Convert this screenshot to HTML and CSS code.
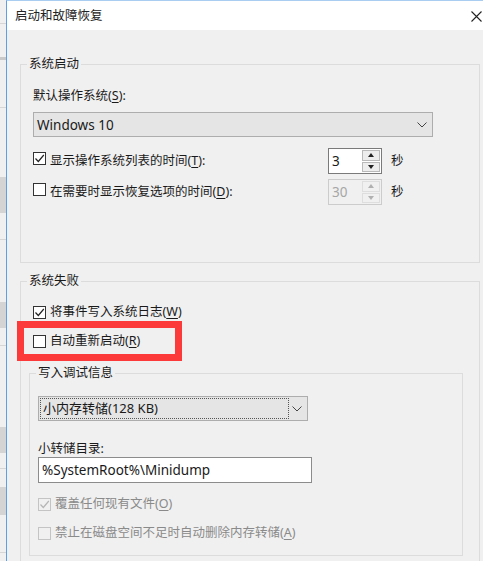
FILE: index.html
```html
<!DOCTYPE html>
<html lang="zh-CN">
<head>
  <meta charset="UTF-8" />
  <meta name="viewport" content="width=device-width, initial-scale=1.0"/>
  <title>启动和故障恢复</title>
  <link rel="stylesheet" href="styles.css">
</head>
<body>
  <div class="screen">

    <!-- window behind the dialog -->
    <div class="behind">
      <div></div><div class="ln"></div><div></div><div class="band"></div>
      <div></div><div class="ln"></div><div></div><div class="blk"></div>
      <div></div><div class="ln"></div><div></div><div class="blk"></div>
      <div></div><div class="ln"></div><div></div><div class="blk"></div>
      <div></div><div class="ln"></div><div></div><div class="blk"></div>
      <div></div><div class="ln"></div><div></div>
    </div>

    <div class="dialog">
      <div class="titlebar">
        <span class="title">启动和故障恢复</span>
        <svg class="close" width="11" height="11" viewBox="0 0 11 11">
          <path d="M0.5 0.5 L10.5 10.5 M10.5 0.5 L0.5 10.5" stroke="#222" stroke-width="1.1" fill="none"/>
        </svg>
      </div>

      <div class="content">

        <!-- 系统启动 -->
        <fieldset class="group boot">
          <legend>系统启动</legend>
          <div class="label first">默认操作系统(<u>S</u>):</div>
          <div class="combo os">
            <span class="combo-text">Windows 10</span>
            <svg class="chev" width="10" height="6" viewBox="0 0 10 6"><path d="M0.5 0.5 L5 5 L9.5 0.5" stroke="#444" fill="none"/></svg>
          </div>

          <div class="timer-row t1">
            <div class="chk">
              <span class="box"><svg width="11" height="11" viewBox="0 0 11 11"><path d="M1.5 5.5 L4.3 8.5 L9.8 2" stroke="#222" stroke-width="1.2" fill="none"/></svg></span>
              <span>显示操作系统列表的时间(<u>T</u>):</span>
            </div>
            <div class="spin">
              <span class="spin-val">3</span>
              <span class="spin-btns"><span class="sb"><i class="up"></i></span><span class="sb"><i class="down"></i></span></span>
            </div>
            <span class="unit">秒</span>
          </div>

          <div class="timer-row t2">
            <div class="chk">
              <span class="box"></span>
              <span>在需要时显示恢复选项的时间(<u>D</u>):</span>
            </div>
            <div class="spin off">
              <span class="spin-val">30</span>
              <span class="spin-btns"><span class="sb"><i class="up"></i></span><span class="sb"><i class="down"></i></span></span>
            </div>
            <span class="unit">秒</span>
          </div>
        </fieldset>

        <!-- 系统失败 -->
        <fieldset class="group fail">
          <legend>系统失败</legend>
          <div class="chk line w">
            <span class="box"><svg width="11" height="11" viewBox="0 0 11 11"><path d="M1.5 5.5 L4.3 8.5 L9.8 2" stroke="#222" stroke-width="1.2" fill="none"/></svg></span>
            <span>将事件写入系统日志(<u>W</u>)</span>
          </div>
          <div class="chk line r">
            <span class="box"></span>
            <span>自动重新启动(<u>R</u>)</span>
          </div>

          <fieldset class="group debug">
            <legend>写入调试信息</legend>
            <div class="combo dump">
              <span class="combo-text focus">小内存转储(128 KB)</span>
              <svg class="chev" width="10" height="6" viewBox="0 0 10 6"><path d="M0.5 0.5 L5 5 L9.5 0.5" stroke="#444" fill="none"/></svg>
            </div>
            <div class="label dir">小转储目录:</div>
            <div class="textbox">%SystemRoot%\Minidump</div>
            <div class="chk line off o">
              <span class="box"><svg width="11" height="11" viewBox="0 0 11 11"><path d="M1.5 5.5 L4.3 8.5 L9.8 2" stroke="#b5b5b5" stroke-width="1.2" fill="none"/></svg></span>
              <span>覆盖任何现有文件(<u>O</u>)</span>
            </div>
            <div class="chk line off a">
              <span class="box"></span>
              <span>禁止在磁盘空间不足时自动删除内存转储(<u>A</u>)</span>
            </div>
          </fieldset>
        </fieldset>

        <!-- red annotation frame -->
        <div class="mark"></div>
      </div>
    </div>
  </div>
</body>
</html>
```

FILE: styles.css
```css
html, body {
  margin: 0;
  padding: 0;
  height: 100%;
  overflow: hidden;
}
body {
  font-family: "Noto Sans", "Noto Sans CJK SC", sans-serif;
  font-size: 12.5px;
  line-height: 16px;
  color: #1a1a1a;
  background: #f0f0f0;
}
u {
  text-decoration-thickness: 1px;
  text-underline-offset: 2px;
}
.screen {
  display: flex;
  height: 561px;
  overflow: hidden;
}

/* window behind */
.behind {
  width: 6px;
  flex: none;
  display: grid;
  grid-template-rows: 23px 1px 33px 3px 47px 1px 69px 36px 26px 1px 62px 26px 17px 1px 81px 26px 15px 1px 18px 28px 37px 1px 1fr;
  background: #f0f0f0;
}
.behind .ln { background: #d6d6d6; }
.behind .band { background: #c9c9c9; }
.behind .blk { background: #d4d4d4; }

/* dialog */
.dialog {
  flex: 1;
  border-left: 1px solid #5fa0e0;
  border-top: 1px solid #a9cdf0;
  display: flex;
  flex-direction: column;
  background: #f0f0f0;
  min-height: 0;
}
.titlebar {
  flex: none;
  height: 29px;
  background: #fff;
  display: flex;
  align-items: center;
  justify-content: space-between;
  padding: 0 1px 0 8px;
}
.title {
  color: #222;
  font-size: 12.5px;
}
.close {
  margin-top: 1px;
}
.content {
  position: relative;
  padding-top: 26px;
  flex: 1;
  min-height: 0;
}

/* group boxes */
.group {
  border: 1px solid #dcdcdc;
  margin: 0;
  min-width: 0;
}
.group legend {
  padding: 0 2px;
  line-height: 16px;
  color: #1a1a1a;
}
.boot {
  margin: 0 3px 0 13px;
  padding: 0 12px 57px 12px;
}
.boot legend { margin-left: -6px; }
.fail {
  margin: 10px 3px 0 13px;
  padding: 0 16px 30px 8px;
}
.fail legend { margin-left: -2px; }
.debug {
  margin-top: 16px;
  padding: 0 8px 14px 8px;
}
.debug legend { margin-left: -2px; }

.label {
  height: 16px;
}
.label.first { margin-top: 16px; }
.label.dir { margin-top: 20px; }

/* combo boxes */
.combo {
  box-sizing: border-box;
  height: 25px;
  border: 1px solid #adadad;
  background: #e5e5e5;
  display: flex;
  align-items: center;
  justify-content: space-between;
}
.combo.os {
  width: 400px;
  margin-top: 8px;
  padding: 0 5px 0 3px;
  font-size: 13.5px;
}
.combo.dump {
  width: 270px;
  margin-top: 15px;
  padding: 0 5px 0 2px;
}
.combo-text.focus {
  width: 247px;
  height: 19px;
  line-height: 19px;
  padding-left: 2px;
  outline: 1px dotted #555;
  box-sizing: border-box;
  font-size: 13px;
}

/* checkbox rows */
.chk {
  display: flex;
  align-items: center;
  gap: 4px;
}
.box {
  box-sizing: border-box;
  width: 13px;
  height: 13px;
  border: 1px solid #333;
  background: #fff;
  display: flex;
  align-items: center;
  justify-content: center;
  flex: none;
}
.timer-row .box {
  margin-bottom: 5px;
}
.line {
  height: 16px;
}
.fail > .line { margin-left: 4px; }
.line.w { margin-top: 15px; }
.line.r { margin-top: 13px; }
.line.o { margin-top: 13px; }
.line.a { margin-top: 13px; }
.off { color: #8a8a8a; }
.off .box {
  border-color: #c4c4c4;
  background: #f0f0f0;
}

/* timer rows */
.timer-row {
  display: grid;
  grid-template-columns: 295px 54px auto;
  align-items: center;
  height: 26px;
}
.timer-row.t1 { margin-top: 11px; }
.timer-row.t2 { margin-top: 5px; }
.unit { margin-left: 9px; }

.spin {
  box-sizing: border-box;
  height: 26px;
  border: 1px solid #7a7a7a;
  display: flex;
  background: #fff;
}
.spin-val {
  flex: 1;
  padding-left: 3px;
  line-height: 24px;
  font-size: 13.5px;
}
.spin-btns {
  width: 18px;
  display: flex;
  flex-direction: column;
  gap: 1px;
  padding: 1px 1px 1px 0;
  background: #fff;
}
.sb {
  flex: 1;
  background: #ededed;
  border: 1px solid #b9b9b9;
  display: flex;
  align-items: center;
  justify-content: center;
}
.sb i {
  width: 0;
  height: 0;
  border-left: 3.5px solid transparent;
  border-right: 3.5px solid transparent;
}
.sb .up { border-bottom: 4px solid #222; }
.sb .down { border-top: 4px solid #222; }
.spin.off {
  border-color: #cccccc;
  background: #f0f0f0;
  color: #a6a6a6;
}
.spin.off .spin-btns { background: #f0f0f0; }
.spin.off .sb {
  background: #f0f0f0;
  border-color: #dedede;
}
.spin.off .up { border-bottom-color: #b0b0b0; }
.spin.off .down { border-top-color: #b0b0b0; }

/* text box */
.textbox {
  box-sizing: border-box;
  width: 274px;
  height: 26px;
  border: 1px solid #8c8c8c;
  background: #fff;
  padding-left: 3px;
  line-height: 24px;
  font-size: 13.5px;
}

/* red annotation */
.mark {
  position: absolute;
  left: 10px;
  top: 291px;
  width: 165px;
  height: 40px;
  box-sizing: border-box;
  border: 7px solid #fd3a3a;
}
```
